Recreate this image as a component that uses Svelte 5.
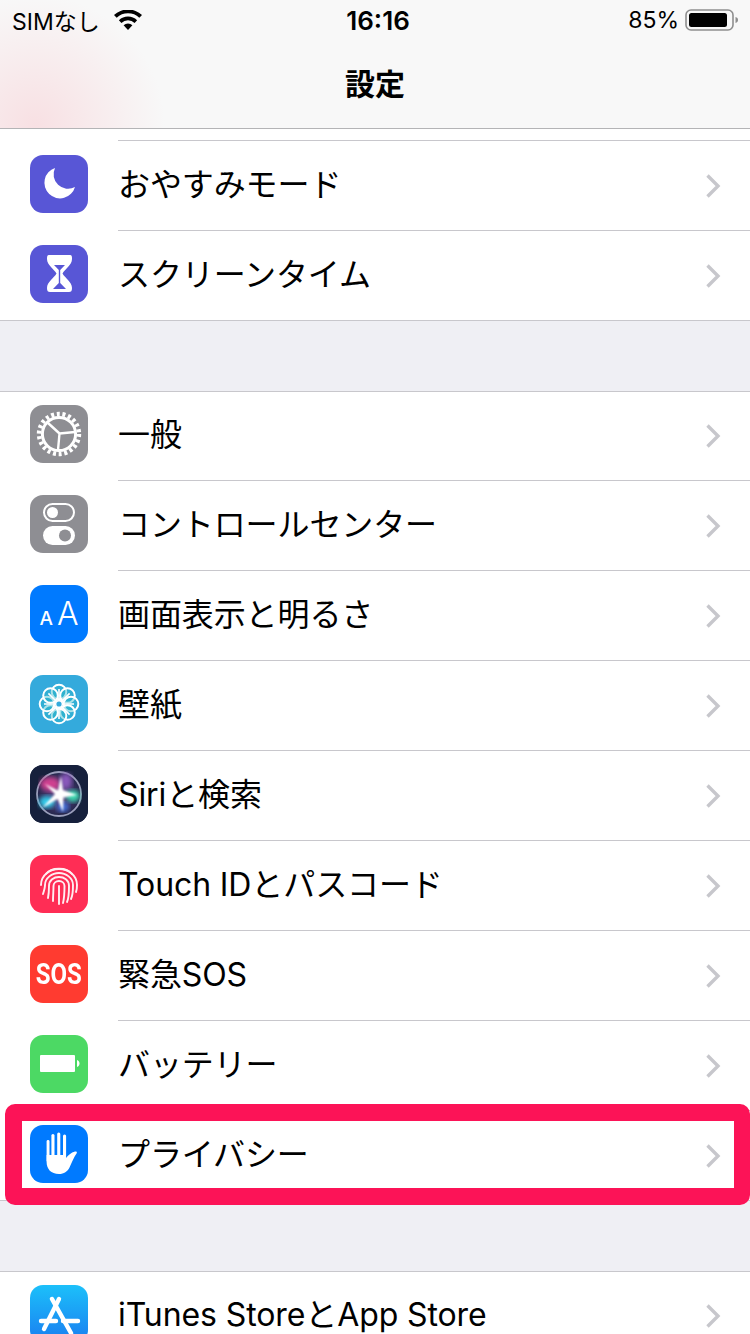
<script lang="ts">
  interface Row {
    label: string;
    icon: string;
  }

  const groups: Row[][] = [
    [
      { label: 'おやすみモード', icon: 'moon' },
      { label: 'スクリーンタイム', icon: 'hourglass' },
    ],
    [
      { label: '一般', icon: 'gear' },
      { label: 'コントロールセンター', icon: 'toggles' },
      { label: '画面表示と明るさ', icon: 'display' },
      { label: '壁紙', icon: 'flower' },
      { label: 'Siriと検索', icon: 'siri' },
      { label: 'Touch IDとパスコード', icon: 'touch' },
      { label: '緊急SOS', icon: 'sos' },
      { label: 'バッテリー', icon: 'battery' },
      { label: 'プライバシー', icon: 'hand' },
    ],
    [{ label: 'iTunes StoreとApp Store', icon: 'store' }],
  ];

  const petals = [0, 45, 90, 135, 180, 225, 270, 315];
</script>

<div class="screen">
  <header class="nav">
    <div class="status">
      <div class="status-left">
        <span>SIMなし</span>
        <svg class="wifi" viewBox="0 0 28 20" width="28" height="20">
          <path d="M14 20 9.6 15.2a6.4 6.4 0 0 1 8.8 0Z" fill="#000" />
          <path d="M7.4 12.9 4.9 10.2a13.3 13.3 0 0 1 18.2 0l-2.5 2.7a9.6 9.6 0 0 0-13.2 0Z" fill="#000" />
          <path d="M2.7 7.8 0 5a20.4 20.4 0 0 1 28 0l-2.7 2.8a16.6 16.6 0 0 0-22.6 0Z" fill="#000" />
        </svg>
      </div>
      <span class="clock">16:16</span>
      <div class="status-right">
        <span>85%</span>
        <svg viewBox="0 0 54 22" width="54" height="22">
          <rect x="1" y="1" width="47" height="20" rx="5" fill="none" stroke="#8e8e8e" stroke-width="1.6" />
          <rect x="4" y="4" width="38" height="14" rx="2.5" fill="#000" />
          <path d="M50.5 8c1.8.4 2.5 1.6 2.5 3s-.7 2.6-2.5 3Z" fill="#8e8e8e" />
        </svg>
      </div>
    </div>
    <h1>設定</h1>
  </header>

  {#each groups as group, g (g)}
    <section class="group" class:first={g === 0}>
      {#each group as row (row.label)}
        <div class="row">
          <div class="icon {row.icon}">
            {#if row.icon === 'moon'}
              <svg viewBox="0 0 58 58"><path d="M25 13A15.600 15.600 0 1 0 45 32 14.500 14.500 0 0 1 25 13Z" fill="#fff" /></svg>
            {:else if row.icon === 'hourglass'}
              <svg viewBox="0 0 58 58">
                <path d="M19 10H40C42 10 42 12 42 14 42 20 35 24 32.5 28.5 35 33 42 37 42 43 42 46 41 47 39 47H20C18 47 17 46 17 43 17 37 24 33 26.5 28.5 24 24 17 20 17 14 17 12 17 10 19 10Z" fill="#fff" />
                <path d="M24 20H35L30.2 25V38L36 44H23L28.8 38V25Z" fill="#5856d6" />
              </svg>
            {:else if row.icon === 'gear'}
              <svg viewBox="0 0 58 58" fill="none" stroke="#fff">
                <circle cx="29" cy="29" r="20" stroke-width="4.400" stroke-dasharray="3 2.712" />
                <circle cx="29" cy="29" r="16.600" stroke-width="3" />
                <path d="M29.500 28.500 18 18M29.500 28.500 45 27M29.500 28.500 28 45" stroke-width="2.400" />
              </svg>
            {:else if row.icon === 'toggles'}
              <svg viewBox="0 0 58 58">
                <rect x="14" y="9" width="30" height="17" rx="8.5" fill="none" stroke="#fff" stroke-width="2" />
                <circle cx="22.5" cy="17.5" r="5.5" fill="#fff" />
                <rect x="13" y="31" width="32" height="19" rx="9.5" fill="#fff" />
                <circle cx="35" cy="40.5" r="6" fill="#8e8e93" />
              </svg>
            {:else if row.icon === 'display'}
              <span class="small-a">A</span><span class="big-a">A</span>
            {:else if row.icon === 'flower'}
              <svg viewBox="0 0 58 58" fill="none" stroke="#fff" stroke-width="2">
                {#each petals as a (a)}
                  <circle cx="29" cy="17" r="7.300" fill="#2cb7c9" fill-opacity="0.4" transform="rotate({a} 29 29)" />
                  <path d="M29 25V14" stroke-width="1.600" transform="rotate({a} 29 29)" />
                {/each}
                <circle cx="29" cy="29" r="3.400" fill="#34aadc" stroke-width="1.600" />
              </svg>
            {:else if row.icon === 'siri'}
              <svg viewBox="0 0 58 58">
                <defs>
                  <radialGradient id="siri-bg" cx="50%" cy="50%" r="55%">
                    <stop offset="0%" stop-color="#6a4a90" />
                    <stop offset="100%" stop-color="#1c2344" />
                  </radialGradient>
                  <filter id="soft"><feGaussianBlur stdDeviation="2.400" /></filter>
                  <filter id="softer"><feGaussianBlur stdDeviation="0.800" /></filter>
                </defs>
                <rect width="58" height="58" fill="#16203c" />
                <circle cx="29" cy="29" r="22" fill="url(#siri-bg)" stroke="#9a9ebb" stroke-width="1.800" />
                <ellipse cx="20" cy="19" rx="10" ry="7" fill="#d03f90" filter="url(#soft)" />
                <ellipse cx="36" cy="16" rx="6" ry="8" fill="#8a58bc" filter="url(#soft)" />
                <ellipse cx="43" cy="31" rx="7" ry="6" fill="#3adcb0" filter="url(#soft)" />
                <ellipse cx="17" cy="37" rx="8" ry="6" fill="#30cdec" filter="url(#soft)" />
                <ellipse cx="33" cy="42" rx="6" ry="5" fill="#4070dc" filter="url(#soft)" />
                <path d="M31 11 33 25 47 30 33.500 32.500 33 47 27.500 34 12 43 25 29 15 19 28 25.500Z" fill="#fff" filter="url(#softer)" />
              </svg>
            {:else if row.icon === 'touch'}
              <svg viewBox="0 0 58 58" fill="none" stroke="#fff" stroke-width="1.9" stroke-linecap="round" opacity="0.92">
                <path d="M16 19C21 12 37 12 42 19" />
                <path d="M11 30C11 20 20 14 29 14 38 14 47 20 47 30 47 33 47 35 46 37" />
                <path d="M13 39C14 36 15 33 15 30 15 23 22 18 29 18 36 18 43 23 43 30 43 35 43 40 41 44" />
                <path d="M18 43C19 38 19 34 19 31 19 25 24 22 29 22 34 22 39 25 39 31 39 37 39 43 37 47" />
                <path d="M23 46C23 41 23.500 36 23.500 31 23.500 28 26 26 29 26 32 26 34.500 28 34.500 31 34.500 37 34.500 42 33 48" />
                <path d="M29 31V49" />
              </svg>
            {:else if row.icon === 'sos'}
              <span class="sos-text">SOS</span>
            {:else if row.icon === 'battery'}
              <svg viewBox="0 0 58 58" fill="#fff">
                <rect x="10" y="20" width="35" height="17" rx="1" />
                <path d="M47 25c1.500.4 2.500 1.800 2.500 3.500S48.500 31.600 47 32Z" />
              </svg>
            {:else if row.icon === 'hand'}
              <svg viewBox="0 0 58 58" fill="#fff">
                <rect x="16.600" y="15" width="2.900" height="22" rx="1.400" />
                <rect x="21.400" y="9" width="3.100" height="26" rx="1.500" />
                <rect x="27.200" y="7.500" width="3.100" height="26" rx="1.500" />
                <rect x="33" y="9.500" width="3.100" height="26" rx="1.500" />
                <path d="M16.600 30H36V33C38 30.500 41 27.500 45 26.500 46.500 26.300 47.300 27 46.700 28.200 44 32 42 37 39.500 42.500 37.500 46.500 34 49 29 49 21 49 16.600 44 16.600 37Z" />
              </svg>
            {:else if row.icon === 'store'}
              <svg viewBox="0 0 58 58" fill="none" stroke="#fff" stroke-width="4.400" stroke-linecap="round">
                <path d="M29 14 14 44" />
                <path d="M22 14 41 48" />
                <path d="M11 36H26M33 36H48" />
              </svg>
            {/if}
          </div>
          <div class="row-body">
            <span class="label">{row.label}</span>
            <svg class="chevron" viewBox="0 0 16 26" width="16" height="26">
              <path d="M2.500 2.500 13 13 2.500 23.500" fill="none" stroke="#c7c7cc" stroke-width="3.400" />
            </svg>
          </div>
        </div>
      {/each}
    </section>
  {/each}

  <div class="highlight"></div>
</div>

<style>
  :global(body) {
    margin: 0;
    background: #efeff4;
  }
  .screen {
    position: relative;
    height: 1334px;
    overflow: hidden;
    background: #efeff4;
    font-family: 'Inter', 'Noto Sans CJK JP', sans-serif;
    color: #000;
  }
  .nav {
    height: 128px;
    border-bottom: 1px solid #b4b4b6;
    background:
      radial-gradient(ellipse 130px 130px at 35px 125px, #f8e0e3 0%, rgba(248, 224, 227, 0) 100%),
      #f8f8f8;
  }
  .status {
    display: grid;
    grid-template-columns: 1fr auto 1fr;
    align-items: center;
    height: 40px;
    padding: 0 11px 0 12px;
    font-size: 23px;
  }
  .status-left {
    display: flex;
    align-items: center;
    gap: 14px;
  }
  .status-right {
    display: flex;
    align-items: center;
    justify-content: flex-end;
    gap: 6px;
  }
  .clock {
    padding-left: 5px;
    font-weight: 600;
    font-size: 26px;
  }
  h1 {
    margin: 16px 0 0;
    text-align: center;
    font-size: 30px;
    line-height: 56px;
    font-weight: 700;
  }
  .group {
    margin-top: 70px;
    background: #fff;
    border-top: 1px solid #c8c7cc;
    border-bottom: 1px solid #c8c7cc;
  }
  .group.first {
    margin-top: 0;
    border-top: none;
    padding-top: 11px;
  }
  .row {
    display: flex;
    align-items: center;
    height: 90px;
    padding-left: 30px;
  }
  .icon {
    flex: none;
    display: flex;
    align-items: center;
    justify-content: center;
    width: 58px;
    height: 58px;
    margin-top: -3px;
    border-radius: 13px;
    overflow: hidden;
    color: #fff;
  }
  .icon svg {
    display: block;
    width: 58px;
    height: 58px;
  }
  .moon,
  .hourglass {
    background: #5856d6;
  }
  .gear,
  .toggles {
    background: #8e8e93;
  }
  .display,
  .hand {
    background: #007aff;
  }
  .flower {
    background: #34aadc;
  }
  .siri {
    background: #16203c;
  }
  .touch {
    background: #ff2d55;
  }
  .sos {
    background: #ff3b30;
  }
  .battery {
    background: #4cd964;
  }
  .store {
    background: linear-gradient(#1cc0fa, #1a7df0);
  }
  .display {
    align-items: baseline;
    font-family: 'Inter', sans-serif;
    line-height: 58px;
  }
  .small-a {
    font-size: 19px;
    font-weight: 500;
    margin-right: 4px;
  }
  .big-a {
    font-size: 32px;
    font-weight: 300;
  }
  .sos-text {
    font-family: 'Roboto', sans-serif;
    font-weight: 700;
    font-size: 30px;
    transform: scaleX(0.8);
  }
  .row-body {
    flex: 1;
    align-self: stretch;
    display: flex;
    align-items: center;
    justify-content: space-between;
    margin-left: 30px;
    padding-right: 29px;
    border-top: 1px solid #c8c7cc;
  }
  .group:not(.first) .row:first-child .row-body {
    border-top: none;
  }
  .group:not(.first) .row:first-child {
    height: 88px;
  }
  .group:not(.first) .row:first-child .icon {
    margin-top: -5px;
  }
  .label {
    margin-bottom: 8px;
    font-size: 32px;
    letter-spacing: -0.1px;
    white-space: nowrap;
  }
  .highlight {
    position: absolute;
    left: 5px;
    top: 1104px;
    width: 745px;
    height: 101px;
    box-sizing: border-box;
    border: 17px solid #fc1357;
    border-right-width: 16px;
    border-radius: 10px;
  }
</style>
